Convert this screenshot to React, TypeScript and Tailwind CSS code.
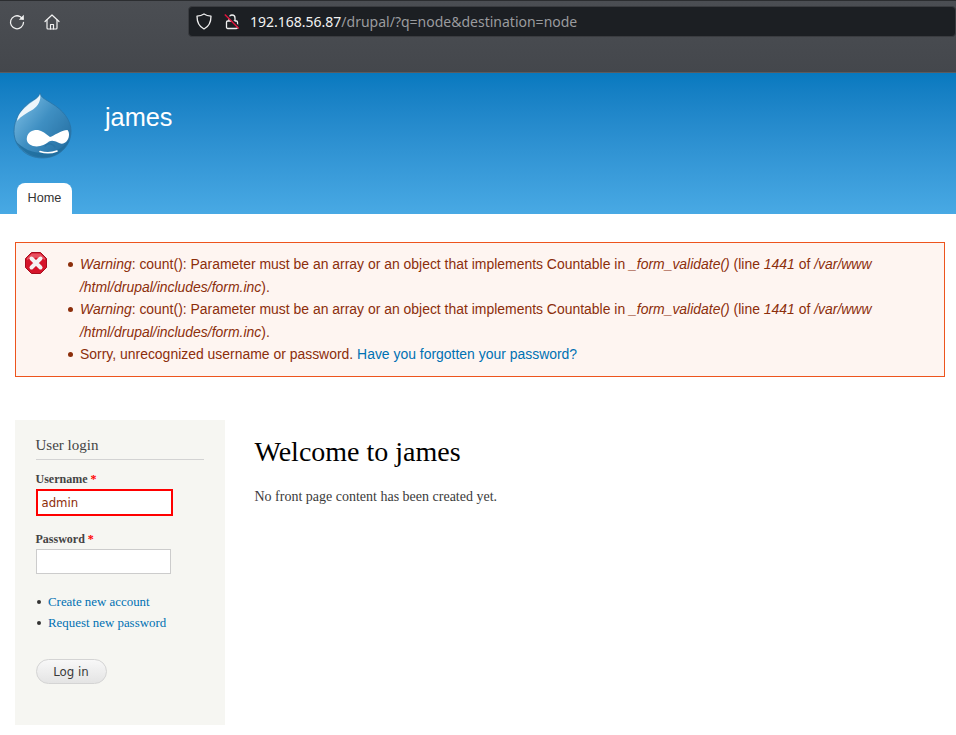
import React from "react";

function DrupalLogo() {
  return (
    <svg width="60" height="68" viewBox="0 0 60 68" className="block">
      <defs>
        <linearGradient id="dg" x1="0.1" y1="0.1" x2="0.9" y2="0.8">
          <stop offset="0" stopColor="#79bbe2" />
          <stop offset="0.5" stopColor="#3f8fc2" />
          <stop offset="1" stopColor="#2873a6" />
        </linearGradient>
      </defs>
      <path d="M27 1C28 6 33 7.500 38 11C50 18 58 28 58 39C58 55 45 66 29.500 66C13.500 66 1 55 1 39.500C1 27 8 17 17 10C22 7 26 5 27 1Z" fill="url(#dg)" stroke="#2a74a6" strokeWidth="0.8" />
      <path d="M27 2C26 6 21 8.500 16 12C10 17 5 22 4 29C8 24 14 21 20 17.500C25 14 28.500 8 27 2Z" fill="#eef6fb" />
      <path d="M2 48C8 60 19 65.500 30 65.500C41 65.500 51 60 56.500 48C49 58 39 61 30 61C20 61 9 57 2 48Z" fill="#1f6d9e" opacity="0.85" />
      <path d="M14 45C15 40 20 37.500 25 38C29 38.500 33 42 37 45C41 44 48 38 54.500 38C56.500 40 56.500 45 54.500 48C52 52 48 52.500 45 50.500C42 49 39 48 36 49.500C32 53 26 55.500 20 54C15 52.500 13 49 14 45Z" fill="#ffffff" />
      <path d="M27 59.500C33 61.500 39 61 44 59" fill="none" stroke="#ffffff" strokeWidth="1.600" strokeLinecap="round" />
      <path d="M32 54C34 51 39 50.500 42 55" fill="none" stroke="#2a74a6" strokeWidth="1.400" strokeLinecap="round" />
    </svg>
  );
}

function ErrorIcon() {
  return (
    <svg width="22" height="22" viewBox="0 0 22 22" className="block">
      <path d="M6.500 0.500H15.500L21.500 6.500V15.500L15.500 21.500H6.500L0.500 15.500V6.500Z" fill="#d5142a" stroke="#a50d1e" />
      <path d="M2 8C7 5 15 5 20 8V6L15 1.500H7L2 6Z" fill="#ee6a76" opacity="0.7" />
      <path d="M6.500 6.500L15.500 15.500M15.500 6.500L6.500 15.500" stroke="#f4f4f4" strokeWidth="4" strokeLinecap="round" />
    </svg>
  );
}

function Warning() {
  return (
    <li className="relative before:absolute before:content-[''] before:left-[-12px] before:top-[9px] before:w-[5px] before:h-[5px] before:rounded-full before:bg-[#8c2e0b]">
      <em>Warning</em>: count(): Parameter must be an array or an object that implements Countable in <em>_form_validate()</em> (line <em>1441</em> of <em>/var/www<br />/html/drupal/includes/form.inc</em>).
    </li>
  );
}

export default function App() {
  return (
    <div className="w-[956px] h-[735px] overflow-hidden bg-white font-['Liberation_Serif',serif]">
      <div className="h-[73px] bg-gradient-to-b from-[#4b4e53] to-[#44474c] border-t-[1px] border-t-[#2b2d30] border-b border-b-[#5a5c60] flex items-start font-['Noto_Sans',sans-serif]">
        <div className="flex items-center pl-[9px] pt-[13px] gap-[19px]">
          <svg width="16" height="16" viewBox="0 0 16 16" fill="none" stroke="#f2f2f2" strokeWidth="1.300" strokeLinecap="round" strokeLinejoin="round">
            <path d="M14.500 8.500A6.500 6.500 0 1 1 11 2.500L14 5" />
            <path d="M14.800 0.800V5.800H9.800Z" fill="#f2f2f2" stroke="none" />
          </svg>
          <svg width="16" height="16" viewBox="0 0 16 16" fill="none" stroke="#f2f2f2" strokeWidth="1.200" strokeLinecap="round" strokeLinejoin="round">
            <path d="M1 7.500L8 1L15 7.500" />
            <path d="M3 6V14C3 14.600 3.400 15 4 15H12C12.600 15 13 14.600 13 14V6" />
            <path d="M6.500 15V10.500H9.500V15" />
          </svg>
        </div>
        <div className="ml-[128px] mt-[5px] w-[780px] h-[31px] bg-[#1c1f23] border border-[#3a3c40] rounded-[4px] flex items-center pl-[7px] text-[14px]">
          <svg width="16" height="17" viewBox="0 0 16 17" fill="none" stroke="#f0f0f0" strokeWidth="1.300" strokeLinejoin="round">
            <path d="M8 1C10 2.300 12.500 3 15 3.200C15 9 13 13.500 8 16C3 13.500 1 9 1 3.200C3.500 3 6 2.300 8 1Z" />
          </svg>
          <svg width="16" height="17" viewBox="0 0 16 17" fill="none" className="ml-[12px]">
            <path d="M5 8V5A3 3 0 0 1 11 5V8" stroke="#f0f0f0" strokeWidth="1.300" />
            <rect x="2.500" y="8" width="11" height="7.500" rx="1.200" stroke="#f0f0f0" strokeWidth="1.300" />
            <path d="M1.600 0.600L15.600 14.600" stroke="#1c1f23" strokeWidth="1.600" />
            <path d="M0.800 1.400L14.800 15.400" stroke="#e0143c" strokeWidth="1.400" />
          </svg>
          <span className="ml-[10px] text-[#f2f2f2] leading-none">192.168.56.87<span className="text-[#9a9b9e]">/drupal/?q=node&amp;destination=node</span></span>
        </div>
      </div>

      <div className="h-[141px] bg-gradient-to-b from-[#0779bf] to-[#48a9e4] pt-[19px] relative">
        <div className="flex items-start pl-[13px]">
          <DrupalLogo />
          <div className="ml-[32px] mt-[9px] text-[25.300px] leading-[32px] text-white font-['Liberation_Sans',sans-serif]">james</div>
        </div>
        <div className="absolute left-[17px] bottom-0 w-[55px] h-[31px] bg-white rounded-t-[8px] text-center pt-[7px] text-[12.700px] leading-[17px] text-[#333333] font-['Liberation_Sans',sans-serif]">Home</div>
      </div>

      <div className="ml-[15px] w-[930px] mt-[28px] h-[135px] border border-[#ed541d] bg-[#fef5f1] text-[#8c2e0b] text-[13.950px] leading-[22.500px] font-['Liberation_Sans',sans-serif] relative pl-[64px] pt-[10px]">
        <div className="absolute left-[9px] top-[9px]"><ErrorIcon /></div>
        <ul className="list-none">
          <Warning />
          <Warning />
          <li className="relative before:absolute before:content-[''] before:left-[-12px] before:top-[9px] before:w-[5px] before:h-[5px] before:rounded-full before:bg-[#8c2e0b]">Sorry, unrecognized username or password. <a className="text-[#0071b3]">Have you forgotten your password?</a></li>
        </ul>
      </div>

      <div className="flex mt-[43px] ml-[15px]">
        <div className="w-[210px] h-[305px] bg-[#f6f6f2] px-[20.500px] pt-[15px] text-[#444444]">
          <div className="w-[168px] border-b border-[#d3d3d3] text-[15px] leading-[20px] pb-[4px]">User login</div>
          <div className="mt-[11px] text-[12px] leading-[16px] font-bold">Username <span className="text-[#ff0000]">*</span></div>
          <div className="mt-[2px] w-[137px] h-[27px] border-2 border-[#ff0000] bg-white text-[11.700px] leading-[25px] pl-[4px] text-[#8c2e0b] font-['DejaVu_Sans',sans-serif]">admin</div>
          <div className="mt-[15px] text-[12px] leading-[16px] font-bold">Password <span className="text-[#ff0000]">*</span></div>
          <div className="mt-[2px] w-[135px] h-[25px] border border-[#ccc] bg-white" />
          <ul className="mt-[18px] list-none pl-[12.500px] text-[12.900px] leading-[21px]">
            <li className="relative before:absolute before:content-[''] before:left-[-11px] before:top-[7.500px] before:w-[4px] before:h-[4px] before:rounded-full before:bg-[#333]"><a className="text-[#0071b3]">Create new account</a></li>
            <li className="relative before:absolute before:content-[''] before:left-[-11px] before:top-[7.500px] before:w-[4px] before:h-[4px] before:rounded-full before:bg-[#333]"><a className="text-[#0071b3]">Request new password</a></li>
          </ul>
          <div className="mt-[25px] w-[71px] h-[25px] rounded-[13px] border border-[#d4d4d4] bg-gradient-to-b from-[#f8f8f8] to-[#e4e4e4] text-center text-[11.800px] leading-[25px] text-[#3a3a3a] font-['DejaVu_Sans',sans-serif]">Log in</div>
        </div>
        <div className="ml-[29.500px] pt-[14px] text-[#3b3b3b]">
          <h1 className="text-[28px] leading-[36px] text-black font-normal">Welcome to james</h1>
          <p className="mt-[16px] text-[14px] leading-[21px]">No front page content has been created yet.</p>
        </div>
      </div>
    </div>
  );
}
